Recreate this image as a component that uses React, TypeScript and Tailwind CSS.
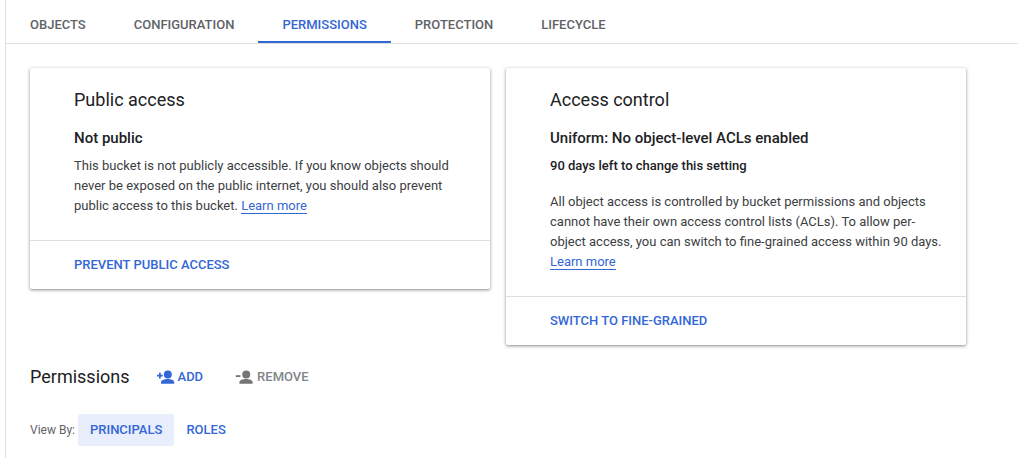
const blue = "text-[#3367d6]";

function PersonAdd({ minus = false, color }: { minus?: boolean; color: string }) {
  return (
    <svg width="20" height="20" viewBox="0 0 20 20" fill={color} aria-hidden="true">
      <g transform={minus ? "translate(-0.6 0)" : undefined}>
        <circle cx="11.8" cy="7.4" r="4" />
        <path d="M11.6 11.9c-2.9 0-6.6 1.2-6.6 3.1v1.7h13.2V15c0-1.9-3.6-3.1-6.6-3.1z" />
      </g>
      {minus ? (
        <path d="M0.8 8.2h4.6v1.8H0.8z" />
      ) : (
        <path d="M3 5.8h1.8v2h2v1.8h-2v2H3v-2H1V7.8h2z" />
      )}
    </svg>
  );
}

function Card({
  title,
  heading,
  sub,
  action,
  children,
}: {
  title: string;
  heading: string;
  sub?: string;
  action: string;
  children: React.ReactNode;
}) {
  return (
    <section className="w-[460px] rounded-[2px] bg-white shadow-[0_1px_3px_rgba(60,64,67,0.5),0_1px_4px_rgba(60,64,67,0.15)]">
      <div className="pl-[44px] pr-[24px] pt-[20px] pb-[24px]">
        <h2 className="text-[18px] leading-[24px] font-normal text-[#202124]">{title}</h2>
        <h3 className="mt-[16px] text-[15px] leading-[20px] font-medium text-[#202124]">{heading}</h3>
        {sub && <p className="mt-[8px] text-[13px] leading-[20px] font-medium text-[#202124]">{sub}</p>}
        {children}
      </div>
      <div className="h-[49px] border-t border-[#e0e0e0] pl-[44px] flex items-center">
        <span className={`text-[13px] font-medium ${blue}`}>{action}</span>
      </div>
    </section>
  );
}

function LearnMore() {
  return <a className={`${blue} border-b border-[#3367d6]`}>Learn more</a>;
}

export default function App() {
  return (
    <div className="h-[458px] w-[1018px] overflow-hidden bg-white font-['Roboto',sans-serif]">
      <div className="ml-[5px] h-full border-l border-[#e0e0e0]">
        <nav className="flex h-[44px] border-b border-[#e0e0e0] text-[13px] font-medium text-[#5f6368]">
          <div className="px-[24px] pt-[7px] flex items-center">OBJECTS</div>
          <div className="px-[24px] pt-[7px] flex items-center">CONFIGURATION</div>
          <div className={`px-[24px] pt-[9px] flex items-center border-b-2 border-[#3367d6] h-[43px] ${blue}`}>PERMISSIONS</div>
          <div className="px-[24px] pt-[7px] flex items-center">PROTECTION</div>
          <div className="px-[24px] pt-[7px] flex items-center">LIFECYCLE</div>
        </nav>
        <main className="pl-[24px] pt-[24px]">
          <div className="flex items-start gap-[16px]">
            <Card title="Public access" heading="Not public" action="PREVENT PUBLIC ACCESS">
              <p className="mt-[8px] text-[13px] leading-[20px] text-[#3c4043]">
                This bucket is not publicly accessible. If you know objects should
                <br />
                never be exposed on the public internet, you should also prevent
                <br />
                public access to this bucket. <LearnMore />
              </p>
            </Card>
            <Card
              title="Access control"
              heading="Uniform: No object-level ACLs enabled"
              sub="90 days left to change this setting"
              action="SWITCH TO FINE-GRAINED"
            >
              <p className="mt-[16px] text-[13px] leading-[20px] text-[#3c4043]">
                All object access is controlled by bucket permissions and objects
                <br />
                cannot have their own access control lists (ACLs). To allow per-
                <br />
                object access, you can switch to fine-grained access within 90 days.
                <br />
                <LearnMore />
              </p>
            </Card>
          </div>
          <div className="mt-[20px] flex h-[24px] items-center">
            <h2 className="text-[18px] leading-[23px] pb-[1px] font-normal text-[#202124]">Permissions</h2>
            <button className={`ml-[26px] flex items-center gap-[2px] text-[13px] font-medium ${blue}`}>
              <PersonAdd color="#3367d6" />
              ADD
            </button>
            <button className="ml-[32px] flex items-center gap-[2px] text-[13px] font-medium text-[#80868b]">
              <PersonAdd minus color="#757575" />
              REMOVE
            </button>
          </div>
          <div className="mt-[25px] flex items-center text-[12px]">
            <span className="text-[#5f6368]">View By:</span>
            <span className={`ml-[3px] flex h-[32px] items-center rounded-[2px] bg-[#e8eefb] px-[12px] text-[13px] font-medium ${blue}`}>PRINCIPALS</span>
            <span className={`flex h-[32px] items-center px-[12px] text-[13px] font-medium ${blue}`}>ROLES</span>
          </div>
        </main>
      </div>
    </div>
  );
}
